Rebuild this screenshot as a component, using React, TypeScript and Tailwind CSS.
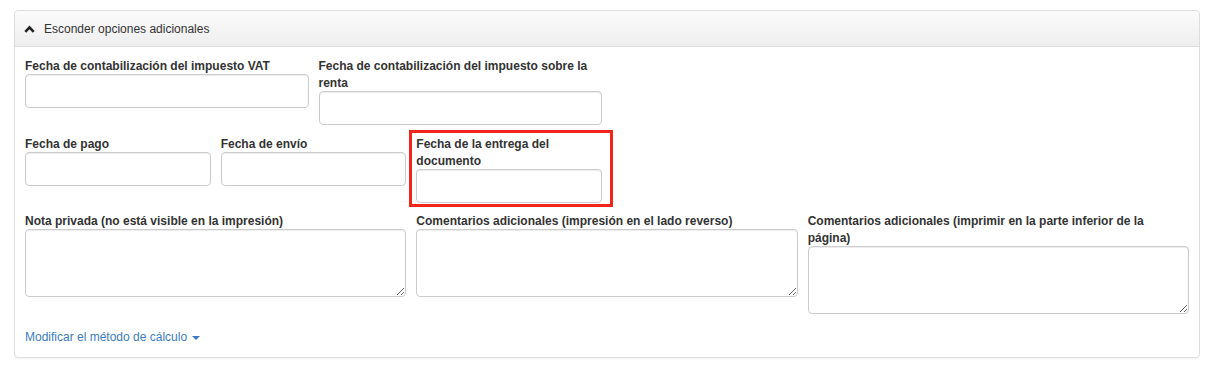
import React from 'react';

const inputCls =
  'block w-full h-[34px] border border-[#ccc] rounded-[4px] bg-white shadow-[inset_0_1px_1px_rgba(0,0,0,0.075)] outline-none';
const textareaCls =
  'block w-full h-[68px] border border-[#ccc] rounded-[4px] bg-white shadow-[inset_0_1px_1px_rgba(0,0,0,0.075)] outline-none';

function Field({ label, area, highlight, width, mb }: { label: string; area?: boolean; highlight?: boolean; width: string; mb: string }) {
  return (
    <div className={`${width} ${mb} px-[5px] relative`}>
      {/* red highlight frame around the field */}
      {highlight && (
        <div className="absolute -left-[2px] -right-[6px] -top-[5px] -bottom-[4px] border-[3px] border-[#f0261b] pointer-events-none" />
      )}
      <label className="block relative top-[1px] font-bold text-[12px] leading-[17px] text-[#333]">{label}</label>
      {area ? <textarea className={textareaCls} /> : <input type="text" className={inputCls} />}
    </div>
  );
}

export default function App() {
  return (
    <div className="w-[1211px] h-[370px] bg-white pt-[10px] pl-[14px] pr-[11px]" style={{ fontFamily: '"Liberation Sans", Arial, sans-serif' }}>
      <div className="border border-[#ddd] rounded-[4px] shadow-[0_1px_1px_rgba(0,0,0,0.05)]">
        {/* Header */}
        <div className="h-[36px] flex items-center pl-[9px] bg-gradient-to-b from-[#fbfbfb] to-[#eeeeee] border-b border-[#ddd] rounded-t-[4px]">
          <svg width="11" height="8" viewBox="0 0 11 8" className="mr-[9px]">
            <path d="M1.3 6.8 L5.5 2.4 L9.7 6.8" fill="none" stroke="#222" strokeWidth="2.6" />
          </svg>
          <span className="text-[12px] text-[#333]">Esconder opciones adicionales</span>
        </div>

        {/* Body */}
        <div className="px-[5px] pt-[10px] pb-[9px]">
          <div className="flex items-start">
            <Field mb="mb-[10px]" width="w-1/4" label="Fecha de contabilización del impuesto VAT" />
            <Field mb="mb-[10px]" width="w-1/4" label="Fecha de contabilización del impuesto sobre la renta" />
          </div>
          <div className="flex items-start">
            <Field mb="mb-[9px]" width="w-1/6" label="Fecha de pago" />
            <Field mb="mb-[9px]" width="w-1/6" label="Fecha de envío" />
            <Field mb="mb-[9px]" width="w-1/6" label="Fecha de la entrega del documento" highlight />
          </div>
          <div className="flex items-start">
            <Field mb="mb-[9px]" width="w-1/3" label="Nota privada (no está visible en la impresión)" area />
            <Field mb="mb-[9px]" width="w-1/3" label="Comentarios adicionales (impresión en el lado reverso)" area />
            <Field mb="mb-[9px]" width="w-1/3" label="Comentarios adicionales (imprimir en la parte inferior de la página)" area />
          </div>
          <div className="px-[5px] pt-[1px]">
            <a className="inline-flex items-center text-[12px] leading-[17px] text-[#3a7cc0] cursor-pointer">
              Modificar el método de cálculo
              <span className="ml-[5px] inline-block w-0 h-0 border-l-[4px] border-r-[4px] border-t-[4px] border-l-transparent border-r-transparent border-t-[#3a7cc0]" />
            </a>
          </div>
        </div>
      </div>
    </div>
  );
}
